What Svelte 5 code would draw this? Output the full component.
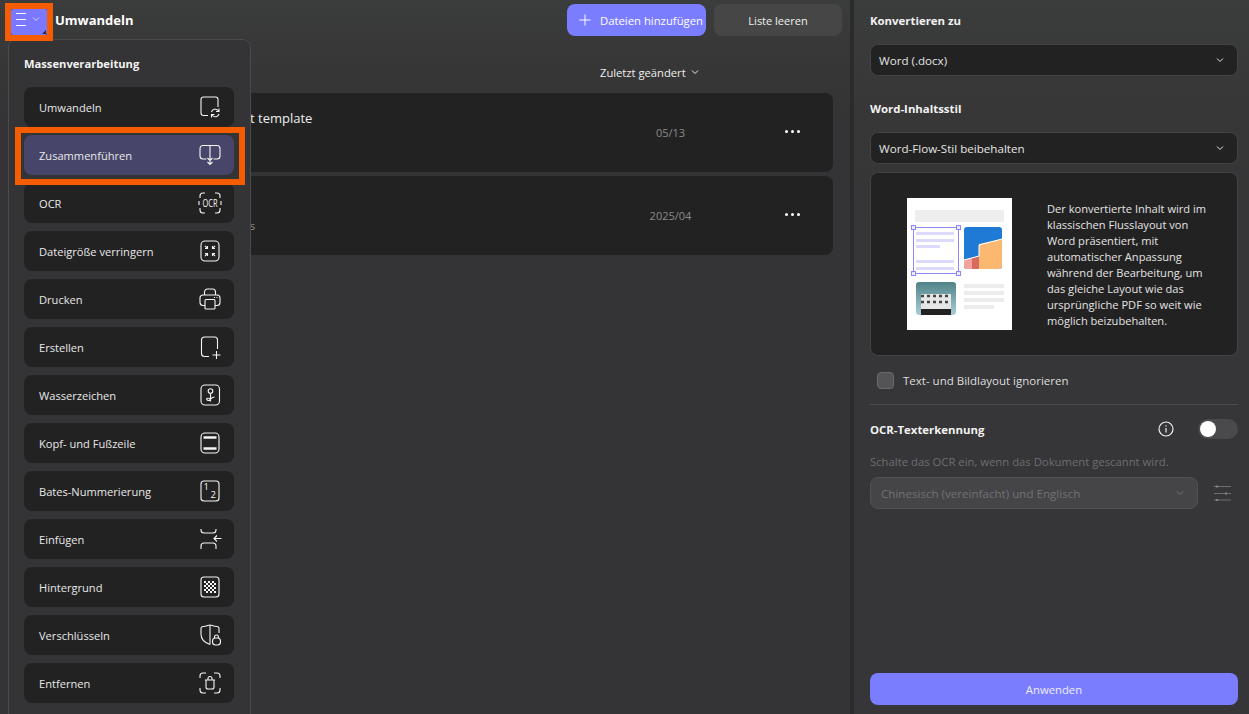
<script lang="ts">
  const items = [
    { label: 'Umwandeln', icon: 'convert' },
    { label: 'Zusammenführen', icon: 'merge', active: true },
    { label: 'OCR', icon: 'ocr' },
    { label: 'Dateigröße verringern', icon: 'compress' },
    { label: 'Drucken', icon: 'print' },
    { label: 'Erstellen', icon: 'create' },
    { label: 'Wasserzeichen', icon: 'stamp' },
    { label: 'Kopf- und Fußzeile', icon: 'header' },
    { label: 'Bates-Nummerierung', icon: 'bates' },
    { label: 'Einfügen', icon: 'insert' },
    { label: 'Hintergrund', icon: 'background' },
    { label: 'Verschlüsseln', icon: 'encrypt' },
    { label: 'Entfernen', icon: 'remove' },
  ];

  // the left part of both rows is covered by the menu
  const files = [
    { name: 't template', sub: '', date: '05/13' },
    { name: '', sub: 's', date: '2025/04' },
  ];

  // checker cells for the background icon
  const cells: number[][] = [];
  for (let r = 0; r < 6; r++) for (let c = 0; c < 6; c++) if ((r + c) % 2 === 0) cells.push([c, r]);
</script>

{#snippet chevron()}
  <svg class="chev" width="10" height="10" viewBox="0 0 10 10"><path d="M2 3.500 5 6.500 8 3.500" /></svg>
{/snippet}

{#snippet menuIcon(name: string)}
  <svg class="micon" width="24" height="24" viewBox="0 0 24 24">
    {#if name === 'convert'}
      <path d="M10 20.500H5.500a2.500 2.500 0 0 1-2.500-2.500V4.500A2.500 2.500 0 0 1 5.500 2h12A2.500 2.500 0 0 1 20 4.500V12" />
      <path d="M13.500 17a3.800 3.800 0 0 1 6.500-1.500l1 1M21 13.500v3h-3M21 19a3.800 3.800 0 0 1-6.500 1.500l-1-1M13.500 22.500v-3h3" />
    {:else if name === 'merge'}
      <path d="M8.500 16H5a3 3 0 0 1-3-3V5.500a3 3 0 0 1 3-3h14a3 3 0 0 1 3 3V13a3 3 0 0 1-3 3h-3.500" />
      <path d="M12 2.500v19M9.500 15l2.500 2.500 2.500-2.500M9.500 19l2.500 2.500 2.500-2.500" />
    {:else if name === 'ocr'}
      <path d="M2 7V5a3 3 0 0 1 3-3h2M17 2h2a3 3 0 0 1 3 3v2M2 17v2a3 3 0 0 0 3 3h2M17 22h2a3 3 0 0 0 3-3v-2M1 10v4M23 10v4" />
      <text x="12" y="15.800" class="ocrtext" textLength="15" lengthAdjust="spacingAndGlyphs">OCR</text>
    {:else if name === 'compress'}
      <rect x="3" y="2" width="18" height="20" rx="4" />
      <path d="M7 7l2.500 2.500M9.500 7v2.500H7M17 7l-2.500 2.500M14.500 7v2.500H17M7 17l2.500-2.500M9.500 17v-2.500H7M17 17l-2.500-2.500M14.500 17v-2.500H17" />
    {:else if name === 'print'}
      <path d="M6.500 8V5a3 3 0 0 1 3-3h5a3 3 0 0 1 3 3v3" />
      <path d="M7 18.500H5a3 3 0 0 1-3-3V11a3 3 0 0 1 3-3h14a3 3 0 0 1 3 3v4.500a3 3 0 0 1-3 3h-2" />
      <rect x="7" y="12.500" width="10" height="9.500" rx="1" />
      <path d="M16 10.500h1M18.500 10.500h1" />
    {:else if name === 'create'}
      <path d="M11 21.500H6.500a3 3 0 0 1-3-3V5a3 3 0 0 1 3-3h10a3 3 0 0 1 3 3v9" />
      <path d="M18.500 16v8M14.500 20h8" />
    {:else if name === 'stamp'}
      <rect x="3" y="2" width="18.500" height="20" rx="4" />
      <circle cx="12.500" cy="8" r="2.300" />
      <path d="M12.500 10.500v8M8.500 15.500c2-.5 3.500 0 4 1.500M8.500 15.500c0 2 2 2.500 4 1.500M16.500 14c-1.800 0-3 1-4 2" />
    {:else if name === 'header'}
      <rect x="3" y="2" width="18" height="20" rx="4" />
      <path class="thick" d="M5.500 6.500h13M5.500 17.500h13" />
    {:else if name === 'bates'}
      <rect x="3" y="2" width="18" height="20" rx="3" />
      <text x="8.300" y="11" class="num">1</text>
      <text x="15.300" y="18.500" class="num">2</text>
    {:else if name === 'insert'}
      <path d="M3 2v1a3 3 0 0 0 3 3h9a3 3 0 0 0 3-3V2M3 22v-3a3 3 0 0 1 3-3h9a3 3 0 0 1 3 3v3" />
      <path d="M23.500 11.500H16M19 8.500l-3 3 3 3" />
    {:else if name === 'background'}
      <rect x="3" y="2" width="18" height="20" rx="3" />
      {#each cells as [c, r]}
        <rect class="cell" x={6 + c * 2} y={6 + r * 2} width="2" height="2" />
      {/each}
    {:else if name === 'encrypt'}
      <path d="M12 21.500C6 19.500 3 16 3 11V5.500a2 2 0 0 1 2-2C9 3.500 10 2 12 2s3 1.500 7 1.500a2 2 0 0 1 2 2V10" />
      <path d="M12 2v19.500" />
      <rect x="14.500" y="15" width="8" height="7" rx="3" />
      <path d="M16.500 15v-1a2 2 0 0 1 4 0v1" />
    {:else}
      <path d="M2 7V5a3 3 0 0 1 3-3h3M16 2h3a3 3 0 0 1 3 3v2M2 17v2a3 3 0 0 0 3 3h3M16 22h3a3 3 0 0 0 3-3v-2" />
      <path d="M7 9h10M10 9V7.500a2 2 0 0 1 4 0V9M8 9v7a2 2 0 0 0 2 2h4a2 2 0 0 0 2-2V9" />
    {/if}
  </svg>
{/snippet}

<div class="screen">
  <main class="main">
    <header class="top">
      <button class="menu-btn">
        <svg width="14" height="15" viewBox="0 0 14 15"><path d="M2 1.500h10M2 7.500h10M2 13.500h10" /></svg>
        {@render chevron()}
        <span class="corner"></span>
      </button>
      <h1>Umwandeln</h1>
      <button class="add">
        <svg width="14" height="14" viewBox="0 0 14 14"><path d="M7 1.500v11M1.500 7h11" /></svg>
        Dateien hinzufügen
      </button>
      <button class="clear">Liste leeren</button>
    </header>

    <div class="sort">Zuletzt geändert {@render chevron()}</div>

    <div class="files">
      {#each files as f}
        <div class="file">
          <div class="finfo">
            <span class="fname">{f.name}</span>
            <span class="fsub">{f.sub}</span>
          </div>
          <span class="fdate">{f.date}</span>
          <span class="dots"><i></i><i></i><i></i></span>
        </div>
      {/each}
    </div>
  </main>

  <aside class="side">
    <h2>Konvertieren zu</h2>
    <div class="select">Word (.docx) {@render chevron()}</div>

    <h2 class="style-h">Word-Inhaltsstil</h2>
    <div class="select">Word-Flow-Stil beibehalten {@render chevron()}</div>

    <div class="desc">
      <div class="page">
        <div class="pg-title"></div>
        <div class="pg-row">
          <div class="pg-sel">
            <i class="h h1"></i><i class="h h2"></i><i class="h h3"></i>
            <i class="h h4"></i><i class="h h5"></i>
            <b class="knob k1"></b><b class="knob k2"></b><b class="knob k3"></b><b class="knob k4"></b>
          </div>
          <svg class="pg-chart" width="38" height="42" viewBox="0 0 38 42">
            <rect width="38" height="42" rx="3" fill="#1f7ad6" />
            <path d="M15 17 38 12v27a3 3 0 0 1-3 3H15Z" fill="#fbb871" />
            <path d="M0 33 15 29V42H3a3 3 0 0 1-3-3Z" fill="#f2a29a" />
            <path d="M8 31 15 29V42H8Z" fill="#d86a5e" />
            <path d="M0 33 15 29V18L38 12" fill="none" stroke="#fff" stroke-width="1" />
          </svg>
        </div>
        <div class="pg-row second">
          <svg class="pg-photo" width="40" height="33" viewBox="0 0 40 33">
            <defs><linearGradient id="sky" x1="0" y1="0" x2="0" y2="1"><stop offset="0" stop-color="#4f8288" /><stop offset="1" stop-color="#a9ced3" /></linearGradient></defs>
            <rect width="40" height="33" rx="3" fill="url(#sky)" />
            <rect x="5" y="12" width="30" height="21" fill="#e6e6e6" />
            <path d="M5 14h30M5 20h30" stroke="#444" stroke-width="2.500" stroke-dasharray="3 3" />
            <rect x="5" y="27" width="30" height="6" fill="#222" />
          </svg>
          <div class="pg-lines"><i></i><i></i><i></i><i class="short"></i></div>
        </div>
      </div>
      <p>Der konvertierte Inhalt wird im klassischen Flusslayout von Word präsentiert, mit automatischer Anpassung während der Bearbeitung, um das gleiche Layout wie das ursprüngliche PDF so weit wie möglich beizubehalten.</p>
    </div>

    <label class="check"><span class="box"></span>Text- und Bildlayout ignorieren</label>

    <hr />

    <div class="ocr-head">
      <h2>OCR-Texterkennung</h2>
      <svg class="info" width="16" height="16" viewBox="0 0 16 16">
        <circle cx="8" cy="8" r="7" />
        <path d="M8 7v4.500" /><path d="M8 4.300v1.300" />
      </svg>
      <span class="toggle"><span></span></span>
    </div>
    <p class="hint">Schalte das OCR ein, wenn das Dokument gescannt wird.</p>
    <div class="ocr-lang">
      <div class="select off">Chinesisch (vereinfacht) und Englisch {@render chevron()}</div>
      <svg class="sliders" width="17" height="18" viewBox="0 0 17 18">
        <path d="M0 2.500h17M0 9.500h17M0 16h17" />
        <path class="knobs" d="M3 1.500v2M12 8.500v2M3 15v2" />
      </svg>
    </div>

    <button class="apply">Anwenden</button>
  </aside>

  <!-- floating batch menu -->
  <nav class="batch">
    <h3>Massenverarbeitung</h3>
    <ul>
      {#each items as it}
        <li class:active={it.active}>
          <span>{it.label}</span>
          {@render menuIcon(it.icon)}
        </li>
      {/each}
    </ul>
  </nav>

  <!-- tutorial highlight frames -->
  <div class="mark mark-btn"></div>
  <div class="mark mark-item"></div>
</div>

<style>
  :global(body) {
    margin: 0;
    background: #353436;
    font-family: "Open Sans", "Noto Sans", sans-serif;
    overflow: hidden;
  }

  .screen {
    position: relative;
    display: flex;
    width: 1249px;
    height: 714px;
    overflow: hidden;
    color: #e8e8e8;
    font-size: 11.500px;
  }

  .chev path {
    fill: none;
    stroke: currentColor;
    stroke-width: 1;
  }

  .main {
    flex: 0 0 850px;
    box-sizing: border-box;
    padding: 4px 17px 0 20px;
    background: linear-gradient(180deg, #3b3c3c 0, #373737 60px, #343335 130px);
  }

  .top {
    display: flex;
    align-items: center;
    height: 32px;
  }

  .menu-btn {
    position: relative;
    display: flex;
    align-items: flex-start;
    gap: 3px;
    box-sizing: border-box;
    width: 36px;
    height: 26px;
    margin: 4px 0 0 -9px;
    padding: 3px 0 0 3px;
    border: 0;
    border-radius: 2px;
    background: #7a78ff;
    color: #d6d6ff;
  }

  .menu-btn .chev {
    margin-top: 2px;
  }

  .menu-btn svg path {
    fill: none;
    stroke: #fff;
    stroke-width: 1;
  }

  .menu-btn .chev path {
    stroke: #d6d6ff;
  }

  .corner {
    position: absolute;
    right: 1px;
    bottom: 1px;
    border-style: solid;
    border-width: 0 0 4px 4px;
    border-color: transparent transparent #2b2a3a transparent;
  }

  h1 {
    flex: 1;
    margin: 0 0 0 8px;
    font-size: 13px;
    font-weight: 700;
    color: #fff;
  }

  button {
    font-family: inherit;
  }

  .add {
    display: flex;
    align-items: center;
    gap: 8px;
    box-sizing: border-box;
    width: 139px;
    height: 32px;
    padding: 0 0 0 11px;
    border: 0;
    border-radius: 8px;
    background: #7b7dff;
    color: #fff;
    font-size: 11.300px;
    white-space: nowrap;
  }

  .add svg path {
    fill: none;
    stroke: #fff;
    stroke-width: 1;
  }

  .clear {
    width: 128px;
    height: 32px;
    margin: 0 -9px 0 8px;
    border: 0;
    border-radius: 8px;
    background: #454645;
    color: #f0f0f0;
    font-size: 11px;
  }

  .sort {
    display: flex;
    align-items: center;
    gap: 4px;
    height: 20px;
    margin: 26px 0 0 580px;
    color: #eee;
    font-size: 11.200px;
    white-space: nowrap;
  }

  .files {
    display: flex;
    flex-direction: column;
    gap: 4px;
    margin-top: 11px;
  }

  .file {
    display: flex;
    align-items: flex-start;
    height: 79px;
    border-radius: 8px;
    background: #232223;
  }

  .finfo {
    display: flex;
    flex-direction: column;
    box-sizing: border-box;
    width: 488px;
    height: 100%;
    padding: 16px 0 0 230px;
  }

  .fname {
    height: 18px;
    font-size: 13px;
    line-height: 18px;
    color: #eee;
  }

  .fsub {
    margin-top: 8px;
    font-size: 11px;
    line-height: 16px;
    color: #8a8a8a;
  }

  .fdate {
    width: 90px;
    margin: 32px 0 0 117.500px;
    font-size: 11px;
    text-align: center;
    color: #8a8a8a;
  }

  .dots {
    display: flex;
    gap: 3px;
    margin: 37px 0 0 69.500px;
  }

  .dots i {
    width: 3px;
    height: 3px;
    border-radius: 50%;
    background: #fff;
  }

  .side {
    position: relative;
    flex: 1;
    display: flex;
    flex-direction: column;
    box-sizing: border-box;
    padding: 12px 11px 9px 16px;
    border-left: 4px solid #2c2b2c;
    background: linear-gradient(180deg, #3b3c3c 0, #373738 110px, #363537 220px);
  }

  h2 {
    margin: 0;
    font-size: 11.400px;
    line-height: 18px;
    font-weight: 700;
    color: #f2f2f2;
  }

  .style-h {
    margin-top: 24px;
  }

  .select {
    display: flex;
    align-items: center;
    justify-content: space-between;
    box-sizing: border-box;
    height: 32px;
    margin-top: 14px;
    padding: 0 12px 0 8px;
    border: 1px solid #434245;
    border-radius: 8px;
    background: #232223;
    color: #e4e4e4;
    font-size: 11.600px;
  }

  .desc {
    display: flex;
    align-items: center;
    box-sizing: border-box;
    height: 184px;
    margin-top: 8px;
    border: 1px solid #434245;
    border-radius: 8px;
    background: #232223;
  }

  .desc p {
    width: 170px;
    margin: 2px 0 0 35px;
    font-size: 11.100px;
    line-height: 16px;
    color: #e4e4e4;
  }

  .page {
    display: flex;
    flex-direction: column;
    box-sizing: border-box;
    width: 105px;
    height: 132px;
    margin-left: 36px;
    padding: 12px 8px;
    background: #fff;
  }

  .pg-title {
    height: 12px;
    background: #eeeeee;
  }

  .pg-row {
    display: flex;
    justify-content: space-between;
    align-items: flex-start;
    margin-top: 5px;
  }

  .pg-row.second {
    margin-top: 8px;
    padding-left: 1px;
  }

  .pg-chart {
    margin-right: 2px;
  }

  .pg-sel {
    position: relative;
    display: flex;
    flex-direction: column;
    box-sizing: border-box;
    width: 46px;
    height: 47px;
    padding: 4px 2px 0;
    border: 1px solid #8d86f5;
    margin-left: -2px;
  }

  .h {
    flex: none;
    height: 3px;
    margin-bottom: 3.500px;
    background: #dcdafc;
  }
  .h1 { width: 38px; }
  .h2 { width: 38px; }
  .h3 { width: 24px; margin-bottom: 12px; }
  .h4 { width: 38px; }
  .h5 { width: 38px; }

  .knob {
    position: absolute;
    width: 3px;
    height: 3px;
    border: 1px solid #8d86f5;
    background: #e9e8ff;
  }
  .k1 { left: -3px; top: -3px; }
  .k2 { right: -3px; top: -3px; }
  .k3 { left: -3px; bottom: -3px; }
  .k4 { right: -3px; bottom: -3px; }

  .pg-lines {
    display: flex;
    flex-direction: column;
    gap: 3px;
    width: 40px;
    margin-top: 2px;
  }

  .pg-lines i {
    height: 4px;
    background: #ececec;
  }

  .pg-lines .short {
    width: 30px;
  }

  .check {
    display: flex;
    align-items: center;
    gap: 9px;
    margin: 16px 0 0 7px;
    color: #dedede;
    font-size: 11.500px;
  }

  .box {
    width: 15px;
    height: 15px;
    border: 1px solid #6a696c;
    border-radius: 4px;
    background: #545356;
  }

  hr {
    width: 100%;
    margin: 15px 0 0;
    border: 0;
    border-top: 1px solid #4c4b4e;
  }

  .ocr-head {
    display: flex;
    align-items: center;
    height: 20px;
    margin-top: 14px;
  }

  .ocr-head h2 {
    flex: 1;
    padding-top: 1px;
  }

  .info {
    margin-right: 24px;
  }

  .info circle, .info path {
    fill: none;
    stroke: #f0f0f0;
    stroke-width: 1.200;
  }

  .toggle {
    display: flex;
    align-items: center;
    width: 40px;
    height: 20px;
    border-radius: 10px;
    background: #4a494c;
  }

  .toggle span {
    width: 16px;
    height: 16px;
    margin-left: 2px;
    border-radius: 50%;
    background: #fff;
  }

  .hint {
    margin: 15px 0 0;
    font-size: 11.300px;
    line-height: 16px;
    color: #6f6e71;
    white-space: nowrap;
  }

  .ocr-lang {
    display: flex;
    align-items: center;
    gap: 16px;
    margin: 7px 7px 0 0;
  }

  .select.off {
    flex: 1;
    margin: 0;
    padding-left: 10px;
    background: #454447;
    border-color: #525154;
    color: #727174;
  }

  .sliders path {
    fill: none;
    stroke: #6e6d70;
    stroke-width: 1;
  }

  .sliders .knobs {
    stroke: #858487;
    stroke-width: 2;
  }

  .apply {
    height: 32px;
    margin-top: auto;
    border: 0;
    border-radius: 8px;
    background: #7b7dff;
    color: #eeeeff;
    font-size: 11.300px;
  }

  .batch {
    position: absolute;
    left: 8px;
    top: 39px;
    box-sizing: border-box;
    width: 243px;
    height: 690px;
    padding: 15px 16px 15px 15px;
    border: 1px solid #4b4a4c;
    border-radius: 8px;
    background: #343335;
  }

  h3 {
    margin: 0;
    font-size: 11.200px;
    line-height: 18px;
    font-weight: 700;
    color: #f2f2f2;
  }

  ul {
    display: flex;
    flex-direction: column;
    gap: 8px;
    margin: 14px 0 0;
    padding: 0;
    list-style: none;
  }

  li {
    display: flex;
    align-items: center;
    justify-content: space-between;
    height: 40px;
    padding: 0 12px 0 15px;
    border-radius: 8px;
    background: #232223;
    color: #e8e8e8;
    font-size: 11.100px;
  }

  li.active {
    background: #47466a;
  }

  .micon path, .micon circle, .micon rect {
    fill: none;
    stroke: #f4f4f4;
    stroke-width: 1.100;
  }

  .micon .thick {
    stroke-width: 2.500;
  }

  .micon .cell {
    fill: #f4f4f4;
    stroke: none;
  }

  .micon text {
    font-family: "Open Sans", sans-serif;
    fill: #f4f4f4;
    text-anchor: middle;
  }

  .micon .ocrtext {
    font-size: 10px;
    text-anchor: start;
    transform: translateX(-7.500px);
  }

  .num {
    font-size: 9.500px;
  }

  .mark {
    position: absolute;
    box-sizing: border-box;
    border: 6px solid #f65c02;
    pointer-events: none;
  }

  .mark-btn {
    left: 5px;
    top: 3px;
    width: 48px;
    height: 38px;
  }

  .mark-item {
    left: 15px;
    top: 127px;
    width: 230px;
    height: 58px;
  }
</style>
